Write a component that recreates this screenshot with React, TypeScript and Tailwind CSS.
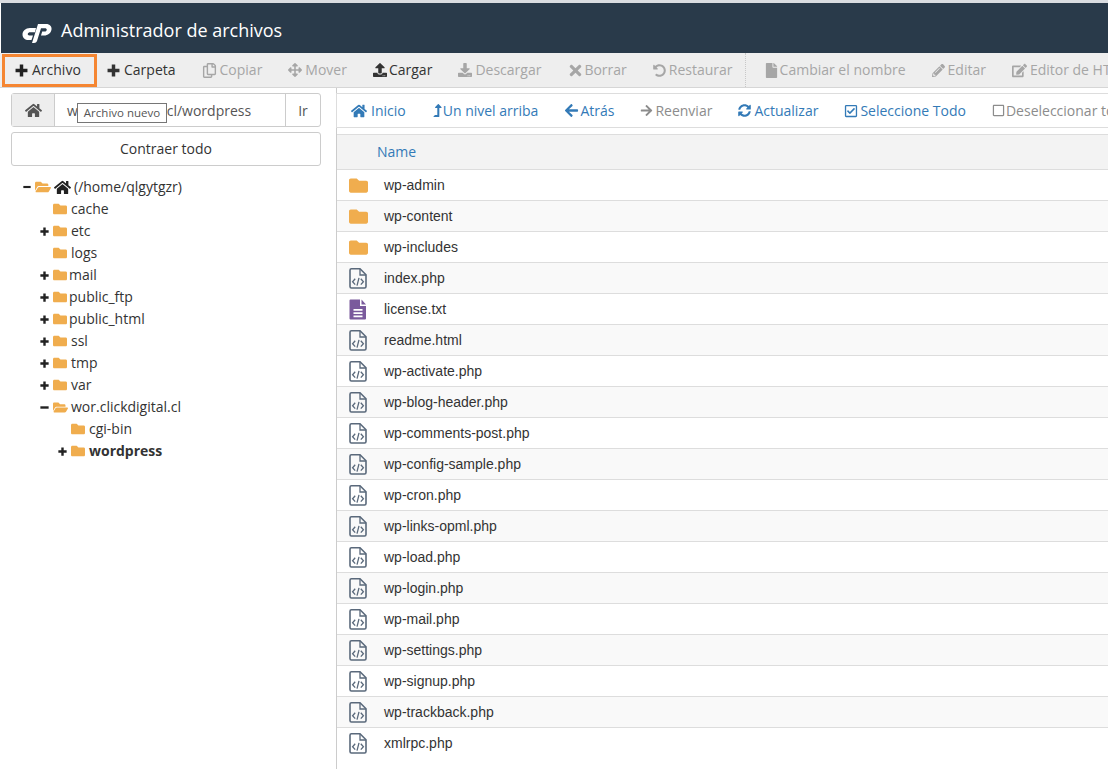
import type { ReactNode } from "react";
import {
  FaArrowLeft,
  FaArrowRight,
  FaArrowsAlt,
  FaDownload,
  FaEdit,
  FaFile,
  FaFolder,
  FaFolderOpen,
  FaHome,
  FaLevelUpAlt,
  FaPencilAlt,
  FaRegCheckSquare,
  FaRegCopy,
  FaRegSquare,
  FaSyncAlt,
  FaTimes,
  FaUndoAlt,
  FaUpload,
} from "react-icons/fa";

function Plus({ size }: { size: number }) {
  return (
    <svg width={size} height={size} viewBox="0 0 12 12" fill="currentColor" className="shrink-0">
      <path d="M4.400 0.500h3.200v3.900h3.900v3.200h-3.900v3.900h-3.200v-3.900h-3.900v-3.200h3.900z" />
    </svg>
  );
}

function Minus({ size }: { size: number }) {
  return (
    <svg width={size} height={size} viewBox="0 0 12 12" fill="currentColor" className="shrink-0">
      <path d="M0.500 4.400h11v3.200h-11z" />
    </svg>
  );
}

function CodeFile() {
  return (
    <svg width="18" height="21" viewBox="0 0 18 21" fill="none" stroke="#5a697b" className="shrink-0">
      <path d="M1 2.200a1.400 1.400 0 0 1 1.400-1.400h8.600l6 6v11.800a1.400 1.400 0 0 1-1.400 1.400h-13.200a1.400 1.400 0 0 1-1.400-1.400z" strokeWidth="1.600" />
      <path d="M11 1v6h6" strokeWidth="1.300" />
      <path d="M6.200 10.800l-2.600 2.900 2.600 2.900M11.800 10.800l2.600 2.900-2.600 2.900M10 9.800l-2 7.800" strokeWidth="1.300" />
    </svg>
  );
}

function TextFile() {
  return (
    <svg width="18" height="21" viewBox="0 0 18 21" className="shrink-0">
      <path d="M0.500 1.500a1 1 0 0 1 1-1h9.500v6.500h6v12.500a1 1 0 0 1-1 1h-14.500a1 1 0 0 1-1-1z" fill="#7a5a9c" />
      <path d="M12.500 0.500l4.500 5h-4.500z" fill="#7a5a9c" />
      <path d="M4.500 10h9v1.800h-9zM4.500 13.200h9v1.800h-9zM4.500 16.400h9v1.800h-9z" fill="#fff" />
    </svg>
  );
}

function Logo() {
  return (
    <svg width="30" height="20" viewBox="0 0 30 20" fill="#fff" className="mt-[3px] shrink-0">
      <path d="M14 5H8C3.500 5 .5 8 .5 11.500.5 15 3 17 6.500 17h3l1.500-4.500H7.500c-1.500 0-2-1-1.700-1.700.4-1 1.200-1.500 2.200-1.500h5z" />
      <path d="M16 1h8c4 0 6 2.500 5.500 5.500-.5 3.500-3.500 6-7.500 6h-3l1.200-4h2.300c1.500 0 2.300-1 2.300-1.800 0-.9-.8-1.500-1.800-1.500h-4L15 18c-.5 1.300-1.500 2-3 2h-2z" />
    </svg>
  );
}

const toolbarLeft: [ReactNode, string, boolean, string][] = [
  [<Plus size={13} />, "Carpeta", true, "w-[17px]"],
  [<FaRegCopy size={15} />, "Copiar", false, "w-[18px]"],
  [<FaArrowsAlt size={14} />, "Mover", false, "w-[17px]"],
  [<FaUpload size={14} />, "Cargar", true, "w-[16px]"],
  [<FaDownload size={14} />, "Descargar", false, "w-[17px]"],
  [<FaTimes size={17} />, "Borrar", false, "w-[17px]"],
  [<FaUndoAlt size={13} />, "Restaurar", false, "w-[16px]"],
];

const toolbarRight: [ReactNode, string, string][] = [
  [<FaFile size={15} />, "Cambiar el nombre", "w-[16px]"],
  [<FaPencilAlt size={13} />, "Editar", "w-[16px]"],
  [<FaEdit size={15} />, "Editor de HTML", "w-[18px]"],
];

const navItems: [ReactNode, string, boolean, string][] = [
  [<FaHome size={16} />, "Inicio", true, "w-[20px]"],
  [<FaLevelUpAlt size={13} />, "Un nivel arriba", true, "w-[11px]"],
  [<FaArrowLeft size={15} />, "Atrás", true, "w-[16px]"],
  [<FaArrowRight size={13} />, "Reenviar", false, "w-[15px]"],
  [<FaSyncAlt size={13} />, "Actualizar", true, "w-[16px]"],
  [<FaRegCheckSquare size={14} />, "Seleccione Todo", true, "w-[16px]"],
  [<FaRegSquare size={13} />, "Deseleccionar todo", false, "w-[14px]"],
];

type TreeRow = { name: string; sign?: "+" | "-"; deep?: boolean; tight?: boolean; open?: boolean; bold?: boolean };

const tree: TreeRow[] = [
  { name: "cache" },
  { name: "etc", sign: "+" },
  { name: "logs" },
  { name: "mail", sign: "+", tight: true },
  { name: "public_ftp", sign: "+", tight: true },
  { name: "public_html", sign: "+", tight: true },
  { name: "ssl", sign: "+" },
  { name: "tmp", sign: "+" },
  { name: "var", sign: "+" },
  { name: "wor.clickdigital.cl", sign: "-", open: true },
  { name: "cgi-bin", deep: true },
  { name: "wordpress", sign: "+", deep: true, bold: true },
];

const files = [
  "wp-admin",
  "wp-content",
  "wp-includes",
  "index.php",
  "license.txt",
  "readme.html",
  "wp-activate.php",
  "wp-blog-header.php",
  "wp-comments-post.php",
  "wp-config-sample.php",
  "wp-cron.php",
  "wp-links-opml.php",
  "wp-load.php",
  "wp-login.php",
  "wp-mail.php",
  "wp-settings.php",
  "wp-signup.php",
  "wp-trackback.php",
  "xmlrpc.php",
];

function fileIcon(i: number) {
  if (i < 3) return <FaFolder size={19} className="shrink-0 text-[#f0ad4e]" />;
  if (i === 4) return <TextFile />;
  return <CodeFile />;
}

export default function App() {
  return (
    <div className="flex h-[769px] w-[1108px] flex-col overflow-hidden bg-white font-['Open_Sans',sans-serif] text-sm text-[#333]">
      <div className="h-[3px] shrink-0 bg-[#d9dce0]" />
      <header className="ml-px flex h-[50px] shrink-0 items-center gap-[9px] bg-[#293a4a] pl-[21px] pt-[6px] text-white">
        <Logo />
        <h1 className="text-[18px] font-normal">Administrador de archivos</h1>
      </header>

      <div className="flex h-[35px] shrink-0 items-center whitespace-nowrap border-b border-[#d6d6d6] bg-[#eeeeee] pl-[2px]">
        <div className="flex h-[33px] w-[95px] shrink-0 items-center self-end border-[3px] border-[#f58632] pb-px pl-[10px] text-[#333]">
          <span className="flex w-[17px] shrink-0 items-center text-[#222]">
            <Plus size={13} />
          </span>
          Archivo
        </div>
        <div className="-ml-[3px] flex shrink-0">
          {toolbarLeft.map(([icon, label, on, w]) => (
            <div key={label} className={`flex items-center px-[13px] ${on ? "text-[#333]" : "text-[#a6a6a6]"}`}>
              <span className={`flex shrink-0 items-center ${w}`}>{icon}</span>
              {label}
            </div>
          ))}
        </div>
        <div className="-ml-px h-[34px] shrink-0 border-l border-dotted border-[#c8c8c8]" />
        <div className="ml-[5px] flex shrink-0">
          {toolbarRight.map(([icon, label, w]) => (
            <div key={label} className="flex items-center px-[13px] text-[#a6a6a6]">
              <span className={`flex shrink-0 items-center ${w}`}>{icon}</span>
              {label}
            </div>
          ))}
        </div>
      </div>

      <div className="flex min-h-0 flex-1">
        <aside className="ml-[11px] w-[310px] shrink-0 pt-[5px]">
          <div className="relative flex h-[34px] rounded-[3px] border border-[#cccccc]">
            <div className="flex w-[43px] items-center justify-center border-r border-[#cccccc] bg-[#eeeeee] text-[#555]">
              <FaHome size={17} />
            </div>
            <div className="flex-1 pl-[12px] leading-[33px] text-[#555]">wor.clickdigital.cl/wordpress</div>
            <div className="w-[35px] border-l border-[#cccccc] text-center leading-[33px] text-[#555]">Ir</div>
            <div className="absolute left-[65px] top-[9px] h-[20px] w-[90px] border border-[#767676] bg-white text-center text-[11.5px] leading-[18px] text-[#555]">
              Archivo nuevo
            </div>
          </div>
          <div className="mt-[5px] h-[34px] rounded-[3px] border border-[#cccccc] text-center leading-[32px]">
            Contraer todo
          </div>

          <div className="mt-[10px] pl-[12px]">
            <div className="flex h-[22px] items-center">
              <span className="text-[#222]">
                <Minus size={8} />
              </span>
              <FaFolderOpen size={16} className="ml-[4px] text-[#f0ad4e]" />
              <FaHome size={17} className="ml-[3px] text-[#222]" />
              <span className="ml-[3px]">(/home/qlgytgzr)</span>
            </div>
            {tree.map((row) => (
              <div key={row.name} className={`flex h-[22px] items-center ${row.deep ? "pl-[35px]" : "pl-[17px]"}`}>
                <span className="flex w-[13px] shrink-0 items-center text-[#222]">
                  {row.sign === "+" && <Plus size={9} />}
                  {row.sign === "-" && <Minus size={9} />}
                </span>
                {row.open ? (
                  <FaFolderOpen size={15} className="shrink-0 text-[#f0ad4e]" />
                ) : (
                  <FaFolder size={14} className="shrink-0 text-[#f0ad4e]" />
                )}
                <span className={`${row.tight ? "ml-[2px]" : row.open ? "ml-[3px]" : "ml-[4px]"} ${row.bold ? "font-bold" : ""}`}>
                  {row.name}
                </span>
              </div>
            ))}
          </div>
        </aside>

        <main className="ml-[15px] min-w-0 flex-1 border-l border-[#cccccc] pt-[5px]">
          <div className="-ml-px flex h-[35px] items-center whitespace-nowrap border-y border-l border-[#dddddd] pl-px">
            {navItems.map(([icon, label, on, w]) => (
              <div key={label} className={`flex shrink-0 items-center px-[13px] ${on ? "text-[#337ab7]" : "text-[#8c8c8c]"}`}>
                <span className={`flex shrink-0 items-center ${w}`}>{icon}</span>
                {label}
              </div>
            ))}
          </div>
          <div className="mt-[6px] flex h-[36px] items-center border-y border-[#dddddd] bg-[#f3f3f3] pb-px pl-[40px] text-[#337ab7]">
            Name
          </div>
          {files.map((name, i) => (
            <div
              key={name}
              className={`flex h-[31px] items-center border-b border-[#dddddd] pl-[12px] font-['Liberation_Sans',sans-serif] text-[14px] last:h-[30px] last:border-b-0 ${
                i % 2 === 1 ? "bg-[#f9f9f9]" : "bg-white"
              }`}
            >
              <span className="flex w-[35px] shrink-0 items-center">{fileIcon(i)}</span>
              {name}
            </div>
          ))}
        </main>
      </div>
    </div>
  );
}
